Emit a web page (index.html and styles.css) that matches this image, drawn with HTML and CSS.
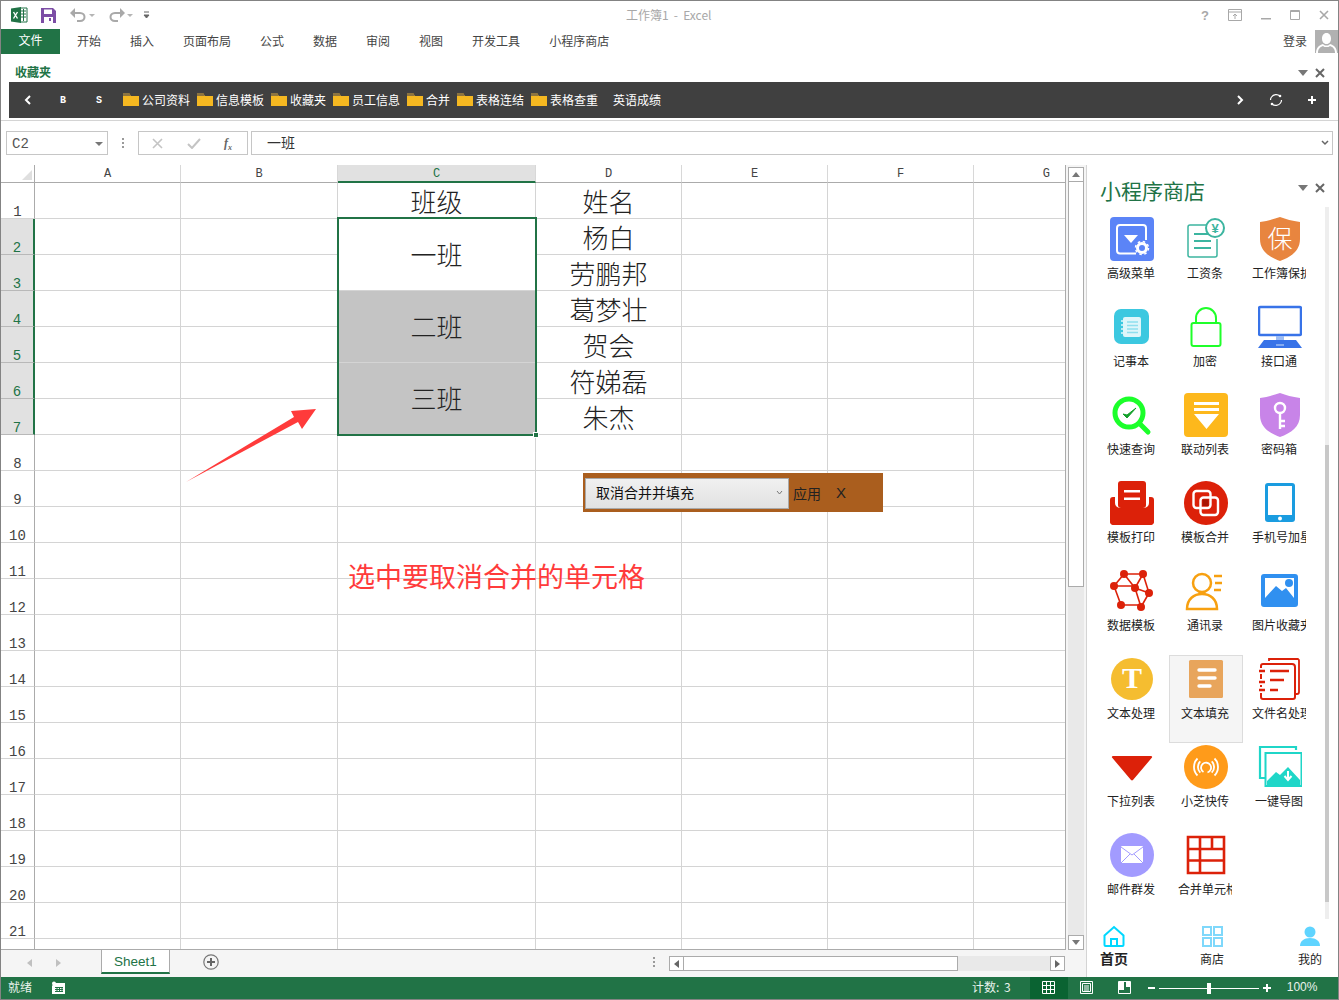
FILE: index.html
```html
<!DOCTYPE html>
<html lang="zh-CN">
<head>
<meta charset="utf-8">
<title>工作簿1 - Excel</title>
<link rel="stylesheet" href="styles.css">
</head>
<body>
<svg class="defs" width="0" height="0">
  <symbol id="folder" viewBox="0 0 16 14"><path d="M0 1h6l2 3h8v10H0z" fill="#f5b821"/><path d="M0 1h6l2 3H0z" fill="#8d7440"/></symbol>
</svg>
<div class="window">
  <header class="titlebar">
    <div class="qat">
      <svg class="qi" width="18" height="18" viewBox="0 0 18 18"><path d="M10 2h7v14h-7z" fill="#fff" stroke="#217346"/><path d="M11 5h5M11 8h5M11 11h5M13.500 3v12" stroke="#217346"/><path d="M1 2.500 11 1v16L1 15.500z" fill="#217346"/><path d="m3.500 6 4 6.500M7.500 6l-4 6.500" stroke="#fff" stroke-width="1.400"/></svg>
      <svg class="qi save" width="15" height="15" viewBox="0 0 15 15"><path d="M0 0h12l3 3v12H0z" fill="#7c4da5"/><path d="M3 1.500h8v4.500H3z" fill="#fff"/><path d="M3 9h9v6H3z" fill="#fff"/><path d="M8 10h2v3H8z" fill="#7c4da5"/></svg>
      <svg class="qi undo" width="17" height="14" viewBox="0 0 17 14"><path d="M4 5h6c6 0 6 8 0 8H7" fill="none" stroke="#a9a9a9" stroke-width="2"/><path d="M0 5l5-5v10z" fill="#a9a9a9"/></svg>
      <i class="tiny"></i>
      <svg class="qi redo" width="17" height="14" viewBox="0 0 17 14"><path d="M13 5H7c-6 0-6 8 0 8h3" fill="none" stroke="#a9a9a9" stroke-width="2"/><path d="M17 5l-5-5v10z" fill="#a9a9a9"/></svg>
      <i class="tiny"></i>
      <svg class="qi more" width="7" height="8" viewBox="0 0 7 8"><path d="M1 1h5M1 4h5l-2.500 3z" fill="#666" stroke="#666"/></svg>
    </div>
    <div class="doc-title">工作簿1 - Excel</div>
    <div class="winctl">
      <span class="help">?</span>
      <svg width="14" height="12" viewBox="0 0 14 12"><path d="M.5.500h13v11H.5zM.5 3h13M7 10V5M5 7l2-2 2 2" fill="none" stroke="#a8a8a8"/></svg>
      <svg width="10" height="12" viewBox="0 0 10 12"><path d="M0 9h10v1.500H0z" fill="#a8a8a8"/></svg>
      <svg width="10" height="12" viewBox="0 0 10 12"><path d="M.5 1.500h9v9h-9zM.5 2.500h9" fill="none" stroke="#a8a8a8"/></svg>
      <svg width="10" height="10" viewBox="0 0 10 10"><path d="m1 1 8 8M9 1l-8 8" stroke="#a8a8a8" stroke-width="1.600"/></svg>
    </div>
  </header>
  <nav class="tabs">
    <div class="file-tab">文件</div>
    <div class="tablist">
      <span>开始</span><span>插入</span><span>页面布局</span><span>公式</span><span>数据</span><span>审阅</span><span>视图</span><span>开发工具</span><span>小程序商店</span>
    </div>
    <div class="login">登录</div>
    <div class="avatar"><svg width="23" height="23" viewBox="0 0 23 23"><path d="M11.500 3c3 0 4.500 2.500 4.500 5.500S14.500 14 11.500 14 7 11.500 7 8.500 8.500 3 11.500 3zM1 23c0-5 3-8 7-9 1 1 2 1.500 3.500 1.500S14 15 15 14c4 1 7 4 7 9h-2c0-4-2-6-5-7-1 1-2 1-3.500 1S9 17 8 16c-3 1-5 3-5 7z" fill="#fff"/></svg></div>
  </nav>
  <section class="fav">
    <div class="fav-head">
      <span class="fav-title">收藏夹</span>
      <span class="pane-ctl"><i class="caret"></i><svg width="10" height="10" viewBox="0 0 10 10"><path d="m1 1 8 8M9 1l-8 8" stroke="#666" stroke-width="2"/></svg></span>
    </div>
    <div class="fav-bar">
      <svg class="chev-l" width="7" height="10" viewBox="0 0 7 10"><path d="M6 1 2 5l4 4" fill="none" stroke="#fff" stroke-width="2"/></svg>
      <span class="bs b1">B</span><span class="bs b2">S</span>
      <span class="fitem"><svg width="16" height="14"><use href="#folder"/></svg>公司资料</span>
      <span class="fitem"><svg width="16" height="14"><use href="#folder"/></svg>信息模板</span>
      <span class="fitem"><svg width="16" height="14"><use href="#folder"/></svg>收藏夹</span>
      <span class="fitem"><svg width="16" height="14"><use href="#folder"/></svg>员工信息</span>
      <span class="fitem"><svg width="16" height="14"><use href="#folder"/></svg>合并</span>
      <span class="fitem"><svg width="16" height="14"><use href="#folder"/></svg>表格连结</span>
      <span class="fitem"><svg width="16" height="14"><use href="#folder"/></svg>表格查重</span>
      <span class="fitem plain">英语成绩</span>
      <span class="fav-right">
        <svg width="7" height="10" viewBox="0 0 7 10"><path d="m1 1 4 4-4 4" fill="none" stroke="#fff" stroke-width="2"/></svg>
        <svg width="14" height="14" viewBox="0 0 14 14"><path d="M2.500 4A5.800 5.800 0 0 1 11 3M11.500 10A5.800 5.800 0 0 1 3 11M1.500 7c0-1 .2-2 1-3M12.500 7c0 1-.2 2-1 3" fill="none" stroke="#fff" stroke-width="1.200"/><circle cx="11" cy="3" r="1.300" fill="#fff"/><circle cx="3" cy="11" r="1.300" fill="#fff"/></svg>
        <svg width="8" height="8" viewBox="0 0 8 8"><path d="M4 0v8M0 4h8" stroke="#fff" stroke-width="2"/></svg>
      </span>
    </div>
  </section>
  <section class="fbar">
    <div class="namebox"><span>C2</span><i class="caret small"></i></div>
    <div class="fdots"><i></i><i></i><i></i></div>
    <div class="fxbox">
      <svg width="11" height="11" viewBox="0 0 11 11"><path d="m1 1 9 9M10 1l-9 9" stroke="#c4c4c4" stroke-width="1.600"/></svg>
      <svg width="14" height="11" viewBox="0 0 14 11"><path d="m1 6 4 4 8-9" fill="none" stroke="#c4c4c4" stroke-width="2"/></svg>
      <span class="fx">f<sub>x</sub></span>
    </div>
    <div class="finput"><span>一班</span><svg width="8" height="6" viewBox="0 0 8 6"><path d="m1 1 3 3 3-3" fill="none" stroke="#666" stroke-width="1.500"/></svg></div>
  </section>
  <main class="main">
    <div class="book">
      <div class="sheet-row">
        <div class="sheet">
          <div class="grid">
            <div class="corner"><i></i></div>
            <div class="ch">A</div><div class="ch">B</div><div class="ch on">C</div><div class="ch">D</div><div class="ch">E</div><div class="ch">F</div><div class="ch end">G</div>

            <div class="rh">1</div><div class="c"></div><div class="c"></div><div class="c t">班级</div><div class="c t">姓名</div><div class="c"></div><div class="c"></div><div class="c"></div>
            <div class="rh on">2</div><div class="c"></div><div class="c"></div><div class="c t m">一班</div><div class="c t">杨白</div><div class="c"></div><div class="c"></div><div class="c"></div>
            <div class="rh on">3</div><div class="c"></div><div class="c"></div><div class="c t">劳鹏邦</div><div class="c"></div><div class="c"></div><div class="c"></div>
            <div class="rh on">4</div><div class="c"></div><div class="c"></div><div class="c t m g">二班</div><div class="c t">葛梦壮</div><div class="c"></div><div class="c"></div><div class="c"></div>
            <div class="rh on">5</div><div class="c"></div><div class="c"></div><div class="c t">贺会</div><div class="c"></div><div class="c"></div><div class="c"></div>
            <div class="rh on">6</div><div class="c"></div><div class="c"></div><div class="c t m g">三班</div><div class="c t">符娣磊</div><div class="c"></div><div class="c"></div><div class="c"></div>
            <div class="rh on">7</div><div class="c"></div><div class="c"></div><div class="c t">朱杰</div><div class="c"></div><div class="c"></div><div class="c"></div>
            <div class="rh">8</div><div class="c"></div><div class="c"></div><div class="c"></div><div class="c"></div><div class="c"></div><div class="c"></div><div class="c"></div>
            <div class="rh">9</div><div class="c"></div><div class="c"></div><div class="c"></div><div class="c"></div><div class="c"></div><div class="c"></div><div class="c"></div>
            <div class="rh">10</div><div class="c"></div><div class="c"></div><div class="c"></div><div class="c"></div><div class="c"></div><div class="c"></div><div class="c"></div>
            <div class="rh">11</div><div class="c"></div><div class="c"></div><div class="c"></div><div class="c"></div><div class="c"></div><div class="c"></div><div class="c"></div>
            <div class="rh">12</div><div class="c"></div><div class="c"></div><div class="c"></div><div class="c"></div><div class="c"></div><div class="c"></div><div class="c"></div>
            <div class="rh">13</div><div class="c"></div><div class="c"></div><div class="c"></div><div class="c"></div><div class="c"></div><div class="c"></div><div class="c"></div>
            <div class="rh">14</div><div class="c"></div><div class="c"></div><div class="c"></div><div class="c"></div><div class="c"></div><div class="c"></div><div class="c"></div>
            <div class="rh">15</div><div class="c"></div><div class="c"></div><div class="c"></div><div class="c"></div><div class="c"></div><div class="c"></div><div class="c"></div>
            <div class="rh">16</div><div class="c"></div><div class="c"></div><div class="c"></div><div class="c"></div><div class="c"></div><div class="c"></div><div class="c"></div>
            <div class="rh">17</div><div class="c"></div><div class="c"></div><div class="c"></div><div class="c"></div><div class="c"></div><div class="c"></div><div class="c"></div>
            <div class="rh">18</div><div class="c"></div><div class="c"></div><div class="c"></div><div class="c"></div><div class="c"></div><div class="c"></div><div class="c"></div>
            <div class="rh">19</div><div class="c"></div><div class="c"></div><div class="c"></div><div class="c"></div><div class="c"></div><div class="c"></div><div class="c"></div>
            <div class="rh">20</div><div class="c"></div><div class="c"></div><div class="c"></div><div class="c"></div><div class="c"></div><div class="c"></div><div class="c"></div>
            <div class="rh">21</div><div class="c"></div><div class="c"></div><div class="c"></div><div class="c"></div><div class="c"></div><div class="c"></div><div class="c"></div>
            <div class="rh"></div><div class="c"></div><div class="c"></div><div class="c"></div><div class="c"></div><div class="c"></div><div class="c"></div><div class="c"></div>
          </div>
          <div class="selection"><i></i></div>
          <svg class="arrow" width="132" height="75" viewBox="0 0 132 75"><path d="M0 74 108 9l-3-6 25-2-14 20-4-7z" fill="#ff3b3b"/></svg>
          <div class="note">选中要取消合并的单元格</div>
          <div class="floatbar">
            <div class="fselect"><span>取消合并并填充</span><svg width="7" height="6" viewBox="0 0 7 6"><path d="m1 1 2.500 3L6 1" fill="none" stroke="#777"/></svg></div>
            <span class="apply">应用</span>
            <span class="fclose">X</span>
          </div>
        </div>
        <div class="vscroll">
          <div class="vbtn"><i class="up"></i></div>
          <div class="vthumb"></div>
          <div class="vtrack"></div>
          <div class="vbtn"><i class="down"></i></div>
        </div>
      </div>
      <div class="sheetbar">
        <div class="nav-arrows"><i class="al"></i><i class="ar"></i></div>
        <div class="sheet-tab">Sheet1</div>
        <svg class="addsheet" width="16" height="16" viewBox="0 0 16 16"><circle cx="8" cy="8" r="7.200" fill="none" stroke="#777" stroke-width="1.200"/><path d="M8 4v8M4 8h8" stroke="#666" stroke-width="2"/></svg>
        <div class="hdots"><i></i><i></i><i></i></div>
        <div class="hscroll">
          <div class="hbtn"><i class="al"></i></div>
          <div class="hthumb"></div>
          <div class="htrack"></div>
          <div class="hbtn"><i class="ar"></i></div>
        </div>
      </div>
    </div>
    <aside class="panel">
      <div class="panel-head">
        <span class="panel-title">小程序商店</span>
        <span class="pane-ctl"><i class="caret"></i><svg width="10" height="10" viewBox="0 0 10 10"><path d="m1 1 8 8M9 1l-8 8" stroke="#666" stroke-width="2"/></svg></span>
      </div>
      <div class="panel-body">
        <div class="apps">
          <div class="app"><svg class="ico" viewBox="0 0 44 44"><rect width="44" height="44" rx="4" fill="#5b84f7"/><path d="M26 36.500H10a3 3 0 0 1-3-3V11a3 3 0 0 1 3-3h23a3 3 0 0 1 3 3v12" fill="none" stroke="#fff" stroke-width="2"/><path d="M14 18h14l-7 8z" fill="#fff"/><circle cx="32" cy="31" r="4.500" fill="none" stroke="#fff" stroke-width="3"/><circle cx="32" cy="31" r="6.500" fill="none" stroke="#fff" stroke-width="1.500" stroke-dasharray="2.500 2.600"/></svg><span>高级菜单</span></div>
          <div class="app"><svg class="ico" viewBox="0 0 44 44"><path d="M22 8H6a2 2 0 0 0-2 2v28a2 2 0 0 0 2 2h25a2 2 0 0 0 2-2V22" fill="none" stroke="#3cb5a0" stroke-width="1.500"/><path d="M10 17h14M10 24h17M10 31h17" stroke="#3cb5a0" stroke-width="1.800"/><circle cx="31" cy="11" r="9" fill="#fff" stroke="#3cb5a0" stroke-width="2"/><text x="31" y="15.500" class="svgt yen">¥</text></svg><span>工资条</span></div>
          <div class="app"><svg class="ico" viewBox="0 0 44 44"><path d="M2 5C10 4 16 2 22 0c6 2 12 4 20 5v17c0 12-9 18-20 22C11 40 2 34 2 22z" fill="#e8853f"/><text x="22" y="31" class="svgt bao">保</text></svg><span>工作簿保护</span></div>

          <div class="app"><svg class="ico" viewBox="0 0 44 44"><rect x="4" y="4" width="35" height="35" rx="7" fill="#3cc8e0"/><rect x="13" y="12" width="18" height="20" rx="2" fill="#dff6fa"/><path d="M11 16h3M11 20h3M11 24h3M11 28h3" stroke="#dff6fa" stroke-width="1.500"/><path d="M17 17h11M17 20.500h11M17 24h11M17 27.500h11" stroke="#8fdfee" stroke-width="1.500"/></svg><span>记事本</span></div>
          <div class="app"><svg class="ico" viewBox="0 0 44 44"><path d="M12 18v-5a10 10 0 0 1 20 0v5" fill="none" stroke="#1fff2a" stroke-width="2"/><rect x="7.500" y="18" width="29" height="23" rx="2" fill="#fff" stroke="#1fff2a" stroke-width="2"/></svg><span>加密</span></div>
          <div class="app"><svg class="ico" viewBox="0 0 44 44"><rect x="1" y="2" width="42" height="28" rx="1.500" fill="#fff" stroke="#3873e8" stroke-width="2.500"/><path d="M18 31h8v4h-8z" fill="#9dbcf4"/><path d="M6 35h32l6 8H0z" fill="#3873e8"/><path d="M18 40h8" stroke="#9dbcf4" stroke-width="1.500"/></svg><span>接口通</span></div>

          <div class="app"><svg class="ico" viewBox="0 0 44 44"><circle cx="19" cy="20" r="14" fill="none" stroke="#1bff2a" stroke-width="5"/><path d="m31 32 7 7" stroke="#1bff2a" stroke-width="5" stroke-linecap="round"/><path d="m13 21 4 4 9-10-9 7z" fill="#13a02a" stroke="#13a02a"/></svg><span>快速查询</span></div>
          <div class="app"><svg class="ico" viewBox="0 0 44 44"><rect width="44" height="44" rx="4" fill="#fdb81c"/><path d="M10 9h25v3H10zM10 15h25v3H10zM10 21h25L22.500 36z" fill="#fff"/></svg><span>联动列表</span></div>
          <div class="app"><svg class="ico" viewBox="0 0 44 44"><path d="M2 5C10 4 16 2 22 0c6 2 12 4 20 5v17c0 12-9 18-20 22C11 40 2 34 2 22z" fill="#c884e8"/><circle cx="22" cy="15" r="5" fill="none" stroke="#fff" stroke-width="2.400"/><path d="M22 20v16M22 28h5M22 33h5" stroke="#fff" stroke-width="2.400"/></svg><span>密码箱</span></div>

          <div class="app"><svg class="ico" viewBox="0 0 44 44"><path d="M5 16v6a5 5 0 0 0 5 5h24a5 5 0 0 0 5-5v-6h2a3 3 0 0 1 3 3v21a4 4 0 0 1-4 4H4a4 4 0 0 1-4-4V19a3 3 0 0 1 3-3z" fill="#dc2109"/><path d="M0 27h44v13a4 4 0 0 1-4 4H4a4 4 0 0 1-4-4z" fill="#dc2109"/><rect x="8" y="0" width="28" height="27" rx="3" fill="#dc2109"/><path d="M14 9h16v2.500H14zM14 16.500h16V19H14z" fill="#fff"/></svg><span>模板打印</span></div>
          <div class="app"><svg class="ico" viewBox="0 0 44 44"><circle cx="22" cy="22" r="22" fill="#dc2109"/><rect x="9.500" y="10" width="17" height="17" rx="3" fill="none" stroke="#fff" stroke-width="2.400"/><rect x="16.500" y="16.500" width="17.500" height="17.500" rx="3" fill="none" stroke="#fff" stroke-width="2.400"/><rect x="18.500" y="18.500" width="6" height="6.500" fill="#a81504"/></svg><span>模板合并</span></div>
          <div class="app"><svg class="ico" viewBox="0 0 44 44"><rect x="7" y="2" width="30" height="39" rx="3" fill="#1a9ce0"/><rect x="10" y="5" width="24" height="29" fill="#fff"/><circle cx="22" cy="37.500" r="2" fill="#fff"/></svg><span>手机号加星</span></div>

          <div class="app"><svg class="ico" viewBox="0 0 44 44"><path d="M14 5h19M14 5 4 17M14 5l11 14M33 5l-8 14M33 5l6 19M4 17h21M4 17l7 19M25 19l14 5M25 19l6 19M39 24l-8 14M11 36h20" stroke="#dc2109" stroke-width="1.600" fill="none"/><g fill="#dc2109"><circle cx="14" cy="5" r="4"/><circle cx="33" cy="5" r="4"/><circle cx="4" cy="17" r="4"/><circle cx="25" cy="19" r="4"/><circle cx="39" cy="24" r="4"/><circle cx="11" cy="36" r="4"/><circle cx="31" cy="38" r="4"/></g></svg><span>数据模板</span></div>
          <div class="app"><svg class="ico" viewBox="0 0 44 44"><circle cx="18" cy="14" r="9" fill="none" stroke="#f7a010" stroke-width="2.500"/><path d="M3 40c0-10 7-15 15-15s15 5 15 15z" fill="none" stroke="#f7a010" stroke-width="2.500"/><path d="M30 7h8M31 14h7M30 21h7" stroke="#f7a010" stroke-width="2.500"/></svg><span>通讯录</span></div>
          <div class="app"><svg class="ico" viewBox="0 0 44 44"><rect x="5" y="7" width="33" height="29" rx="1" fill="#fff" stroke="#3090f0" stroke-width="4"/><path d="M7 29 18 17l6 5 4-3 8 10v5H7z" fill="#3090f0"/><circle cx="31" cy="14" r="4" fill="#3090f0"/></svg><span>图片收藏夹</span></div>

          <div class="app"><svg class="ico" viewBox="0 0 44 44"><circle cx="22" cy="22" r="21" fill="#f5bd30"/><text x="22" y="31" class="svgt tee">T</text></svg><span>文本处理</span></div>
          <div class="app sel-on"><svg class="ico" viewBox="0 0 44 44"><rect x="5" y="3" width="34" height="38" rx="1.500" fill="#e8a55c"/><path d="M15 13h16M15 21h16M15 29h11" stroke="#fff" stroke-width="3.400" stroke-linecap="round"/></svg><span>文本填充</span></div>
          <div class="app"><svg class="ico" viewBox="0 0 44 44"><path d="M11 4V2h29a2 2 0 0 1 1 2v31a2 2 0 0 1-2 2h-2" fill="none" stroke="#dc2109" stroke-width="1.800"/><path d="M3 11V9a2 2 0 0 1 2-2h29a3 3 0 0 1 3 3v30a2 2 0 0 1-2 2H5a2 2 0 0 1-2-2v-4M3 17v5M3 28v2" fill="none" stroke="#dc2109" stroke-width="2"/><path d="M1 14h6M1 25h6M1 33h6M12 14h19M12 23h14M12 33h8" stroke="#dc2109" stroke-width="2.400"/></svg><span>文件名处理</span></div>

          <div class="app"><svg class="ico" viewBox="0 0 44 44"><path d="M3 11h38a1 1 0 0 1 1 1.500L23 35a1.500 1.500 0 0 1-2 0L2 12.500A1 1 0 0 1 3 11z" fill="#dc2109"/></svg><span>下拉列表</span></div>
          <div class="app"><svg class="ico" viewBox="0 0 44 44"><circle cx="22" cy="22" r="22" fill="#ff9b1a"/><g fill="none" stroke="#fff" stroke-width="1.800"><path d="M13.500 13.500a12 12 0 0 0 0 17M30.500 13.500a12 12 0 0 1 0 17M16.300 16.300a8 8 0 0 0 0 11.400M27.700 16.300a8 8 0 0 1 0 11.400M19.500 27a5 5 0 1 1 4 .5"/></g></svg><span>小芝快传</span></div>
          <div class="app"><svg class="ico" viewBox="0 0 44 44"><path d="M38 5V2H2v31h5" fill="none" stroke="#1fd6c8" stroke-width="2.200"/><rect x="7.500" y="8" width="36" height="33" fill="#fff" stroke="#1fd6c8" stroke-width="2"/><path d="M9 41V36l9-9 4 3 8-8 12 13v6z" fill="#1fd6c8"/><path d="M30 26v7M26.500 31l3.500 4 3.500-4" fill="none" stroke="#fff" stroke-width="2"/></svg><span>一键导图</span></div>

          <div class="app"><svg class="ico" viewBox="0 0 44 44"><circle cx="22" cy="22" r="22" fill="#a29bff"/><rect x="11" y="13" width="22" height="17" rx="1" fill="#fff"/><path d="m11 14 11 8 11-8M11 30l9-9M33 30l-9-9" fill="none" stroke="#a29bff" stroke-width="1"/></svg><span>邮件群发</span></div>
          <div class="app"><svg class="ico" viewBox="0 0 44 44"><path d="M4 4h36v36H4zM4 16h36M4 27.500h36M16 4v36M28 4v12" fill="none" stroke="#dc2109" stroke-width="2.600"/></svg><span>合并单元格</span></div>
        </div>
        <div class="ptrack"><div class="pthumb"></div></div>
      </div>
      <div class="pnav">
        <div class="pnav-item home"><svg width="22" height="22" viewBox="0 0 22 22"><path d="M1.500 10.500 11 2l9.500 8.500V20a1 1 0 0 1-1 1h-17a1 1 0 0 1-1-1z" fill="none" stroke="#00d8ff" stroke-width="2"/><path d="M8 21v-7h6v7" fill="none" stroke="#00d8ff" stroke-width="2"/></svg><span>首页</span></div>
        <div class="pnav-item"><svg width="22" height="22" viewBox="0 0 22 22"><g fill="none" stroke="#7fd8fb" stroke-width="2"><rect x="2" y="2" width="8" height="8"/><rect x="13" y="2" width="8" height="8"/><rect x="2" y="13" width="8" height="8"/><rect x="13" y="13" width="8" height="8"/></g></svg><span>商店</span></div>
        <div class="pnav-item"><svg width="22" height="22" viewBox="0 0 22 22"><circle cx="11" cy="7" r="5.500" fill="#5fd4ff"/><path d="M1 21c0-5 4-8 10-8s10 3 10 8z" fill="#5fd4ff"/></svg><span>我的</span></div>
      </div>
    </aside>
  </main>
  <footer class="status">
    <span class="ready">就绪</span>
    <svg class="macro" width="13" height="13" viewBox="0 0 13 13"><path d="M2 2h11v11H0V5" fill="#fff"/><circle cx="2" cy="2.500" r="2" fill="#fff"/><path d="M3 6.500h8M3 8.500h8M3 10.500h8M5 6v5M7.500 6v5M10 6v5" stroke="#217346"/></svg>
    <span class="count">计数: 3</span>
    <div class="views">
      <div class="view on"><svg width="13" height="13" viewBox="0 0 13 13"><path d="M.5.500h12v12H.5zM.5 4.500h12M.5 8.500h12M4.500.500v12M8.500.500v12" fill="none" stroke="#fff"/></svg></div>
      <div class="view"><svg width="13" height="13" viewBox="0 0 13 13"><path d="M.5.500h12v12H.5zM2.500 2.500h8v8h-8zM4 5h5M4 7h5M4 9h5" fill="none" stroke="#fff"/></svg></div>
      <div class="view"><svg width="13" height="13" viewBox="0 0 13 13"><path d="M.5.500h12v12H.5z" fill="none" stroke="#fff"/><path d="M1 1h5v8H1zM8 1h4v5H8z" fill="#fff"/></svg></div>
    </div>
    <div class="zoomer">
      <i class="zm"></i>
      <div class="slider"><i></i></div>
      <i class="zp"></i>
    </div>
    <span class="pct">100%</span>
  </footer>
</div>
</body>
</html>
```
FILE: styles.css
```css
* { box-sizing: border-box; }
html, body { margin: 0; padding: 0; background: #fff; }
body { font-family: "Noto Sans CJK SC", "Liberation Sans", sans-serif; font-size: 12px; color: #444; }
.defs { position: absolute; }
i { display: block; font-style: normal; }
svg { display: block; flex: none; }

.window { width: 1339px; height: 1000px; border: 1px solid #838383; display: flex; flex-direction: column; overflow: hidden; background: #fff; }

/* title bar */
.titlebar { height: 28px; flex: none; position: relative; display: flex; align-items: center; }
.qat { display: flex; align-items: center; padding-left: 9px; width: 625px; }
.qi.save { margin-left: 13px; }
.qi.undo { margin-left: 14px; }
.qi.redo { margin-left: 13px; }
.qi.more { margin-left: 10px; }
.tiny { width: 0; height: 0; margin-left: 2px; border: 3px solid transparent; border-top: 3px solid #b5b5b5; border-bottom: 0; }
.doc-title { color: #a8a8a8; font-size: 12px; line-height: 16px; word-spacing: 2.5px; margin-bottom: 1px; }
.winctl { margin-left: auto; display: flex; align-items: center; gap: 19px; padding-right: 9px; }
.help { color: #a8a8a8; font: bold 13px "Liberation Sans", sans-serif; margin-right: 0; }

/* ribbon tabs */
.tabs { height: 25px; flex: none; display: flex; align-items: center; }
.file-tab { width: 59px; height: 25px; background: #217346; color: #fff; text-align: center; line-height: 22px; }
.tablist { display: flex; gap: 29px; margin-left: 17px; color: #444; padding-bottom: 3px; }
.login { margin-left: auto; margin-right: 8px; color: #444; padding-bottom: 3px; }
.avatar { width: 23px; height: 23px; background: #b1b1b1; margin-bottom: 1px; overflow: hidden; }

/* favourites */
.fav { height: 67px; flex: none; padding: 10px 8px 0; border-bottom: 1px solid #d4d4d4; }
.fav-head { height: 18px; display: flex; align-items: center; justify-content: space-between; padding: 0 5px 0 6px; }
.fav-title { color: #217346; font-weight: 700; font-size: 12px; line-height: 14px; margin-bottom: 3px; }
.pane-ctl { display: flex; align-items: center; gap: 7px; }
.caret { width: 0; height: 0; border-left: 5px solid transparent; border-right: 5px solid transparent; border-top: 6px solid #777; }
.fav-bar { height: 36px; width: 1320px; background: #404040; color: #fff; display: flex; align-items: center; padding-left: 15px; }
.bs { font: 700 10px "Liberation Mono", monospace; color: #fff; width: 8px; }
.b1 { margin-left: 29px; }
.b2 { margin-left: 28px; }
.fitem { display: flex; align-items: center; gap: 3px; margin-right: 7px; white-space: nowrap; padding-bottom: 2px; }
.b2 + .fitem { margin-left: 19px; }
.fitem.plain { margin-left: 8px; }
.fav-right { margin-left: auto; display: flex; align-items: center; gap: 25px; padding-right: 13px; }

/* formula bar */
.fbar { height: 44px; flex: none; padding: 10px 5px 10px 5px; display: flex; align-items: stretch; }
.namebox { width: 102px; border: 1px solid #c6c6c6; display: flex; align-items: center; justify-content: space-between; padding: 1px 4px 0 5px; font: 14px "Liberation Mono", monospace; color: #555; }
.caret.small { border-left-width: 4px; border-right-width: 4px; border-top-width: 4px; }
.fdots { width: 30px; display: flex; flex-direction: column; align-items: center; justify-content: center; gap: 2px; }
.fdots i { width: 2px; height: 2px; background: #9a9a9a; }
.fxbox { width: 110px; border: 1px solid #c6c6c6; display: flex; align-items: center; padding-left: 13px; gap: 24px; }
.fx { font: italic 700 12px "Liberation Serif", serif; color: #666; margin-left: -1px; }
.fx sub { font-size: 8px; line-height: 0; }
.finput { flex: 1; margin-left: 3px; border: 1px solid #c6c6c6; display: flex; align-items: center; justify-content: space-between; padding: 0 3px 0 15px; font-size: 14px; color: #333; }
.finput span { margin-bottom: 2px; }

/* main */
.main { height: 812px; flex: none; display: flex; }
.book { width: 1085px; flex: none; display: flex; flex-direction: column; }
.sheet-row { height: 785px; flex: none; display: flex; }
.sheet { width: 1065px; flex: none; position: relative; overflow: hidden; border-right: 1px solid #ababab; border-bottom: 1px solid #ababab; }
.grid { display: grid; grid-template-columns: 34px 146px 157px 198px 146px 146px 146px 92px; grid-auto-rows: 36px; grid-template-rows: 18px; }
.corner { border-right: 1px solid #ababab; border-bottom: 1px solid #ababab; position: relative; display: flex; justify-content: flex-end; align-items: flex-end; padding: 0 2px 2px 0; }
.corner i { width: 0; height: 0; border-left: 10px solid transparent; border-bottom: 10px solid #dfdfdf; }
.ch { border-right: 1px solid #d8d8d8; border-bottom: 1px solid #ababab; text-align: center; font: 12px/19px "Liberation Mono", monospace; color: #444; }
.ch.end { text-align: right; padding-right: 15px; }
.ch.on { background: #e1e1e1; color: #217346; border-bottom: 2px solid #217346; }
.rh { border-right: 1px solid #ababab; border-bottom: 1px solid #d4d4d4; font: 14px/11px "Liberation Mono", monospace; color: #444; text-align: center; display: flex; align-items: flex-end; justify-content: center; }
.rh.on { background: #e1e1e1; color: #217346; border-right: 2px solid #217346; border-bottom-color: #b8b8b8; }
.c { border-right: 1px solid #d4d4d4; border-bottom: 1px solid #d4d4d4; }
.c.t { font-size: 26px; font-weight: 300; color: #222; display: flex; align-items: center; justify-content: center; line-height: 1; }
.c.m { grid-row: span 2; padding-bottom: 2px; }
.c.g { background: #c4c4c4; }
.selection { position: absolute; left: 336px; top: 52px; width: 200px; height: 219px; border: 2px solid #217346; }
.selection i { position: absolute; right: -4px; bottom: -4px; width: 6px; height: 6px; background: #217346; border: 1px solid #fff; }
.arrow { position: absolute; left: 185px; top: 243px; }
.note { position: absolute; left: 347px; top: 391px; font-size: 27px; line-height: 40px; color: #ff3b3b; white-space: nowrap; }
.floatbar { position: absolute; left: 582px; top: 308px; width: 300px; height: 39px; background: #aa5e1e; display: flex; align-items: center; padding-left: 2px; color: #222; font-size: 14px; }
.fselect { width: 204px; height: 31px; background: linear-gradient(#f0f0f0, #e2e2e2); border: 1px solid #a9a9a9; display: flex; align-items: center; justify-content: space-between; padding: 0 5px 0 10px; color: #111; margin-top: 1px; }
.fselect span { margin-bottom: 2px; }
.apply { margin-left: 4px; }
.fclose { margin-left: 13px; font: 15px "Liberation Sans", sans-serif; padding-left: 2px; }

/* vertical scrollbar */
.vscroll { width: 20px; flex: none; padding: 2px 2px 0 2px; display: flex; flex-direction: column; background: #f5f5f5; }
.vbtn { height: 15px; flex: none; border: 1px solid #ababab; background: #fff; display: flex; align-items: center; justify-content: center; }
.vthumb { height: 405px; flex: none; background: #fff; border: 1px solid #ababab; border-top: 0; }
.vtrack { flex: 1; background: #e9e9e9; }
.up { width: 0; height: 0; border: 4px solid transparent; border-bottom: 5px solid #777; border-top: 0; }
.down { width: 0; height: 0; border: 4px solid transparent; border-top: 5px solid #777; border-bottom: 0; }

/* sheet tabs */
.sheetbar { height: 27px; flex: none; background: #f5f5f5; display: flex; align-items: flex-start; position: relative; }
.nav-arrows { display: flex; gap: 24px; padding: 9px 0 0 26px; width: 100px; }
.al { width: 0; height: 0; border: 4px solid transparent; border-right: 5px solid #c0c0c0; border-left: 0; }
.ar { width: 0; height: 0; border: 4px solid transparent; border-left: 5px solid #c0c0c0; border-right: 0; }
.sheet-tab { width: 69px; height: 24px; background: #fff; border: 1px solid #ababab; border-top: 0; border-bottom: 2px solid #217346; color: #217346; font: 13.500px/23px "Liberation Sans", sans-serif; text-align: center; }
.addsheet { margin: 4px 0 0 33px; }
.hdots { margin: 7px 0 0 434px; width: 2px; display: flex; flex-direction: column; gap: 2px; }
.hdots i { width: 2px; height: 2px; background: #9a9a9a; }
.hscroll { width: 396px; height: 15px; margin: 6px 0 0 14px; display: flex; background: #e9e9e9; }
.hbtn { width: 15px; height: 15px; flex: none; border: 1px solid #ababab; background: #fff; display: flex; align-items: center; justify-content: center; }
.hbtn .al { border-right-color: #666; }
.hbtn .ar { border-left-color: #666; }
.hthumb { width: 274px; flex: none; background: #fff; border: 1px solid #ababab; border-left: 0; }
.htrack { flex: 1; }

/* right panel */
.panel { flex: 1; border-left: 1px solid #d4d4d4; display: flex; flex-direction: column; min-width: 0; }
.panel-head { height: 42px; flex: none; display: flex; align-items: flex-end; justify-content: space-between; padding: 0 13px 0 13px; }
.panel-title { color: #217346; font-size: 21px; line-height: 30px; margin-bottom: 2px; white-space: nowrap; }
.panel-head .pane-ctl { margin-bottom: 14px; }
.panel-body { height: 712px; flex: none; display: flex; padding-left: 8px; }
.apps { width: 222px; flex: none; padding-top: 8px; display: grid; grid-template-columns: repeat(3, 74px); grid-auto-rows: 88px; }
.app { display: flex; flex-direction: column; align-items: center; padding-top: 2px; }
.app.sel-on { background: #f5f5f5; border: 1px solid #dcdcdc; padding-top: 1px; }
.ico { width: 44px; height: 44px; }
.app span { width: 54px; margin: 4px 2px 0 0; text-align: center; overflow: hidden; white-space: nowrap; color: #222; font-size: 12px; line-height: 16px; }
.svgt { text-anchor: middle; }
.yen { font: 700 13px "Liberation Sans", sans-serif; fill: #3cb5a0; }
.bao { font: 300 25px "Noto Sans CJK SC", sans-serif; fill: #fff; }
.tee { font: 700 30px "Liberation Serif", serif; fill: #fff; }
.ptrack { width: 4px; margin-left: 8px; background: #eee; flex: none; padding-top: 238px; }
.pthumb { height: 457px; background: #c8c8c8; }
.pnav { flex: 1; display: flex; gap: 58px; padding: 6px 0 0 7px; }
.pnav-item { width: 40px; display: flex; flex-direction: column; align-items: center; color: #222; font-size: 12px; }
.pnav-item span { margin-top: 2px; line-height: 19px; }
.pnav-item.home span { font-size: 14px; font-weight: 700; }

/* status bar */
.status { height: 22px; flex: none; background: #217346; color: #e9f2ec; display: flex; align-items: center; font-size: 12px; }
.ready { margin-left: 7px; margin-bottom: 3px; }
.macro { margin-left: 20px; margin-bottom: 2px; }
.count { margin-left: 907px; white-space: nowrap; word-spacing: 2px; margin-bottom: 3px; }
.views { margin-left: 19px; display: flex; height: 22px; }
.view { width: 38px; display: flex; align-items: center; justify-content: center; padding-bottom: 2px; }
.view.on { background: #0a6332; }
.zoomer { margin-left: 4px; display: flex; align-items: center; }
.zm { width: 7px; height: 2px; background: #fff; }
.zp { width: 8px; height: 8px; background: linear-gradient(#fff, #fff) center/100% 2px no-repeat, linear-gradient(#fff, #fff) center/2px 100% no-repeat; }
.slider { width: 100px; height: 1px; background: #fff; margin: 0 4px; position: relative; }
.slider i { position: absolute; left: 48px; top: -5px; width: 4px; height: 11px; background: #fff; }
.pct { margin-left: 16px; font: 12px "Liberation Sans", sans-serif; margin-bottom: 3px; }
```
